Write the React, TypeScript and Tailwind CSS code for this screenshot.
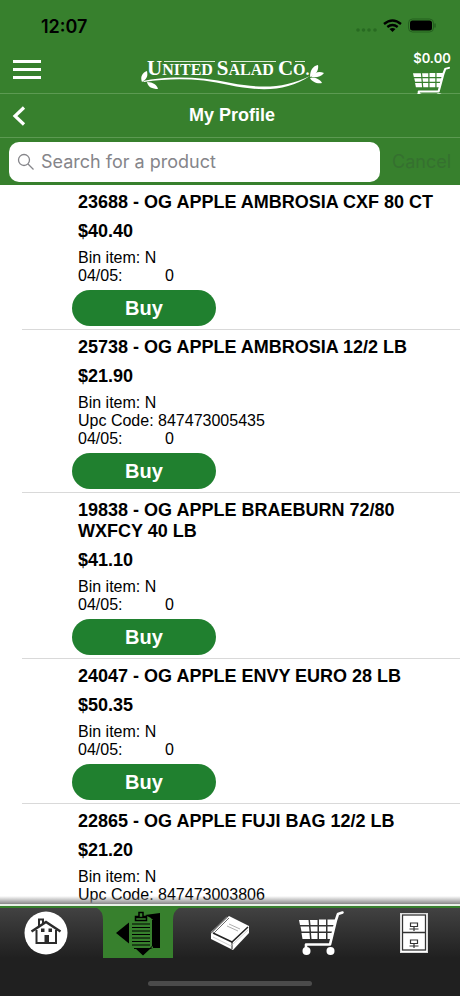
import { ReactNode } from "react";

type Product = {
  code: string;
  name: string;
  price: string;
  bin: string;
  upc?: string;
  date: string;
  qty: number;
};

const products: Product[] = [
  { code: "23688", name: "OG APPLE AMBROSIA CXF 80 CT", price: "$40.40", bin: "N", date: "04/05", qty: 0 },
  { code: "25738", name: "OG APPLE AMBROSIA 12/2 LB", price: "$21.90", bin: "N", upc: "847473005435", date: "04/05", qty: 0 },
  { code: "19838", name: "OG APPLE BRAEBURN 72/80 WXFCY 40 LB", price: "$41.10", bin: "N", date: "04/05", qty: 0 },
  { code: "24047", name: "OG APPLE ENVY EURO 28 LB", price: "$50.35", bin: "N", date: "04/05", qty: 0 },
  { code: "22865", name: "OG APPLE FUJI BAG 12/2 LB", price: "$21.20", bin: "N", upc: "847473003806", date: "04/05", qty: 0 },
];

function Logo() {
  return (
    <svg width="190" height="40" viewBox="1 -4 190 40" fill="#fff">
      <text
        x="10"
        y="21"
        fontSize="16"
        fontWeight="700"
        fontFamily="'Liberation Serif', serif"
      >
        <tspan fontSize="21">U</tspan>NITED <tspan fontSize="21">S</tspan>ALAD{" "}
        <tspan fontSize="21">C</tspan>O.
      </text>
      <path d="M27 7.500H78M94 7.500H139M158 7.500H168" stroke="#dcebd8" strokeWidth="1" />
      <path d="M6 27C28 22 62 22 94 29C126 35 148 34 173 22C150 37 126 38 92 31C62 24 34 24 7 28Z" />
      {/* leaves on both ends of the branch */}
      <path d="M5 28C3 23 5 19 10 17C11 22 10 25 5 28Z" />
      <path d="M10 28C16 28 20 31 21 35C15 35 11 33 10 28Z" />
      <path d="M173 23C173 16 176 12 181 11C182 16 179 21 173 23Z" />
      <path d="M174 23C178 18 182 17 187 19C184 23 179 24 174 23Z" />
      <path d="M173 24C178 23 183 25 185 29C180 30 175 28 173 24Z" />
    </svg>
  );
}

function CartIcon({ className, viewBox = "0 0 46 46" }: { className: string; viewBox?: string }) {
  return (
    <svg className={className} viewBox={viewBox} preserveAspectRatio="none" fill="#fff">
      <path d="M0 10H9.500L10 15H1ZM11 10H18.500V15H11.500ZM20 9.500H27V15H20ZM28.500 9.500H37L35.500 15H28.500Z" />
      <path d="M1.500 16.500H10L10.500 21.500H2.500ZM11.500 16.500H18.500V21.500H12ZM20 16.500H27V21.500H20ZM28.500 16.500H35.500L34.500 21.500H28.500Z" />
      <path d="M2.500 23H10.500L11 29H3.500ZM12 23H18.500V29H12.500ZM20 23H27V29H20ZM28.500 23H34L33 29H28.500Z" />
      <path d="M43.500 2.500L39 4L37 10L31 34.500H7V38" fill="none" stroke="#fff" strokeWidth="2.600" strokeLinejoin="round" strokeLinecap="round" />
      <circle cx="7.500" cy="41" r="4" />
      <circle cx="31.500" cy="41" r="4" />
    </svg>
  );
}

function HomeIcon() {
  return (
    <svg width="44" height="44" viewBox="0 0 44 44">
      <circle cx="22" cy="22" r="21.500" fill="#fff" />
      <g fill="none" stroke="#2c2c2c" strokeWidth="2">
        <path d="M7.500 20.500L22 11L36.500 20.500" strokeWidth="2.500" />
        <path d="M12.500 19V32H32V19" />
        <path d="M15 15V8.500H19V12" />
      </g>
      <path d="M20.500 24H25V33H20.500ZM17 17.500H20.500V21H17ZM24.500 17.500H28V21H24.500Z" fill="#2c2c2c" />
    </svg>
  );
}

function OrdersIcon() {
  return (
    <svg width="46" height="46" viewBox="0 0 46 46" fill="#000">
      <path d="M1 23L14 12.500V33.500Z" />
      <path d="M30 5L45 3V38H38L35 39L28 45.500L20 38H34L38 35V11L36 8Z" />
      <path d="M16 9.500H38V38H16Z" fill="#37802d" />
      <path d="M17 14H35M17 17.500H35M17 21H35M17 24.500H35M17 28H35M17 31.500H35M17 35H35" stroke="#000" strokeWidth="1" />
      <path d="M37.500 10V36L35 38.500H19" fill="none" stroke="#000" strokeWidth="1" />
      <path d="M20.500 10.500V6.500H24V2.500H28V6.500H31.500V10.500Z" fill="#37802d" stroke="#000" strokeWidth="1.500" />
      <path d="M21 7.500H31" stroke="#000" strokeWidth="1.500" />
    </svg>
  );
}

function BookIcon() {
  return (
    <svg width="42" height="36" viewBox="0 0 42 36">
      <path d="M20 1L40 11V18L24 35L2 24V17Z" fill="#fff" />
      <path d="M18 2L2 18" stroke="#777" strokeWidth="1.500" />
      <path d="M4 18L23 27L39 12" fill="none" stroke="#222" strokeWidth="1.500" />
      <path d="M23 27V34" stroke="#222" strokeWidth="1" />
      <path d="M4 22L22 31L39 15" fill="none" stroke="#bbb" strokeWidth="0.700" />
      <path d="M20 9L31 14M18 11L29 16" stroke="#999" strokeWidth="0.800" />
      <path d="M20 3L5 18" stroke="#444" strokeWidth="0.800" />
    </svg>
  );
}

function CabinetIcon() {
  return (
    <svg width="28" height="40" viewBox="0 0 28 40" fill="none" stroke="#333">
      <rect x="0.500" y="0.500" width="27" height="39" fill="#fff" stroke="#ddd" />
      <rect x="2.500" y="2" width="23" height="35" strokeWidth="1.300" />
      <path d="M2 19.500H26" strokeWidth="1.500" />
      <path d="M10.500 10H17.500V13.500H10.500ZM9.500 16H18.500M14 14V18M10.500 27H17.500V30.500H10.500ZM9.500 33H18.500M14 31V35" strokeWidth="1.200" />
    </svg>
  );
}

function StatusBar() {
  return (
    <div className="flex h-[46px] items-center justify-between pl-[41px] pr-6 pt-1.5 text-black">
      <span className="font-['Inter',sans-serif] text-[18px] font-semibold">12:07</span>
      <svg width="81" height="16" viewBox="0 0 81 16">
        <g fill="#286a22">
          <circle cx="3" cy="12" r="1.800" />
          <circle cx="8.500" cy="12" r="1.800" />
          <circle cx="14" cy="12" r="1.800" />
          <circle cx="20" cy="12" r="1.800" />
        </g>
        <g fill="none" stroke="#000" strokeWidth="2.400">
          <path d="M29 6Q37.500 -1 46 6" />
          <path d="M32.300 9Q37.500 5 42.700 9" />
        </g>
        <path d="M34.500 11Q37.500 8.800 40.500 11L37.500 14Z" />
        <rect x="53.500" y="1" width="25" height="13" rx="4" fill="none" stroke="#24611f" />
        <rect x="55" y="2.500" width="22" height="10" rx="2.500" />
        <path d="M80 5.500V9.500" stroke="#24611f" strokeWidth="1.500" />
      </svg>
    </div>
  );
}

function ProductRow({ product }: { product: Product }) {
  return (
    <li className="ml-[22px] border-b border-[#d9d9d9] pb-[3px] pl-[50px] pr-5 pt-[7px]">
      <div className="pl-1.5">
        <h2 className="text-[18px] font-bold leading-[21px]">{`${product.code} - ${product.name}`}</h2>
        <p className="mt-2 text-[18px] font-bold leading-[21px]">{product.price}</p>
        <div className="mt-[7px] text-[16px] leading-[18px]">
          <p>{`Bin item: ${product.bin}`}</p>
          {product.upc && <p>{`Upc Code: ${product.upc}`}</p>}
          <p className="flex">
            <span className="w-[87px]">{`${product.date}:`}</span>
            <span>{product.qty}</span>
          </p>
        </div>
      </div>
      <button className="mt-[5px] block h-9 w-36 rounded-full bg-[#20802f] text-[20px] font-bold text-white">
        Buy
      </button>
    </li>
  );
}

function Tab({ label, active, children }: { label: string; active?: boolean; children: ReactNode }) {
  return (
    <a href="#" aria-label={label} className="flex h-[50px] flex-1 justify-center">
      {active ? (
        <span className="relative flex h-full w-[70px] items-center justify-center bg-[#37802d]">
          {/* flared top corners */}
          <svg className="absolute -left-1.5 top-0" width="82" height="12" viewBox="0 0 82 12" fill="#37802d">
            <path d="M0 0H82Q76 3 76 12H6Q6 3 0 0Z" />
          </svg>
          <span className="relative">{children}</span>
        </span>
      ) : (
        <span className="flex items-center">{children}</span>
      )}
    </a>
  );
}

export default function App() {
  return (
    <div className="flex h-screen flex-col overflow-hidden bg-white font-['Liberation_Sans',Arial,sans-serif] text-black">
      <header className="shrink-0 bg-[#37802d] text-white">
        <StatusBar />
        <div className="flex h-12 items-center justify-between border-b border-[#5c9a52] pl-[13px] pr-2">
          <button aria-label="Menu" className="flex w-10 flex-col gap-[5px]">
            <span className="h-[3px] w-7 bg-white" />
            <span className="h-[3px] w-7 bg-white" />
            <span className="h-[3px] w-7 bg-white" />
          </button>
          <Logo />
          <button aria-label="Cart" className="flex w-10 flex-col items-center pt-1 font-['Inter',sans-serif] text-[13px] font-semibold leading-4">
            $0.00
            <CartIcon className="h-7 w-[38px]" viewBox="0 0 46 38" />
          </button>
        </div>
        <div className="flex h-11 items-center border-b border-[#5c9a52] px-3">
          <button aria-label="Back" className="w-6">
            <svg width="14" height="20" viewBox="0 0 14 20" fill="none" stroke="#fff" strokeWidth="3.200">
              <path d="M12 1.500L3 10L12 18.500" />
            </svg>
          </button>
          <h1 className="flex-1 pr-5 text-center text-[18px] font-bold">My Profile</h1>
        </div>
        <div className="flex h-[47px] items-center pl-[9px] pr-2">
          <label className="flex h-10 flex-1 items-center gap-1.5 rounded-[10px] bg-white px-2">
            <svg width="18" height="18" viewBox="0 0 18 18" fill="none" stroke="#85858a" strokeWidth="1.300">
              <circle cx="7" cy="7" r="5.500" />
              <path d="M11 11L16.500 16.500" />
            </svg>
            <input
              type="text"
              aria-label="Search for a product"
              placeholder="Search for a product"
              className="min-w-0 flex-1 font-['Inter',sans-serif] text-[18px] text-black outline-none placeholder:text-[#85858a]"
            />
          </label>
          <button className="w-[72px] pl-3 text-left font-['Inter',sans-serif] text-[18px] text-[#35702f]">Cancel</button>
        </div>
      </header>

      <main className="min-h-0 flex-1 overflow-hidden">
        <ul>
          {products.map((product) => (
            <ProductRow key={product.code} product={product} />
          ))}
        </ul>
      </main>

      <footer className="relative shrink-0 bg-[#202020]">
        <div className="pointer-events-none absolute inset-x-0 -top-2 h-2 bg-linear-to-b from-transparent to-[#888]" />
        <div className="h-0.5 bg-[#e8f0e6]" />
        <div className="h-0.5 bg-[#37802d]" />
        <nav className="flex bg-linear-to-b from-[#424242] to-[#202020]">
          <Tab label="Home">
            <HomeIcon />
          </Tab>
          <Tab label="Orders" active>
            <OrdersIcon />
          </Tab>
          <Tab label="Catalog">
            <BookIcon />
          </Tab>
          <Tab label="Cart">
            <CartIcon className="h-[46px] w-[46px]" />
          </Tab>
          <Tab label="Archive">
            <CabinetIcon />
          </Tab>
        </nav>
        <div className="flex h-[38px] items-end justify-center pb-2.5">
          <div className="h-[5px] w-[164px] rounded-full bg-[#4b4b4b]" />
        </div>
      </footer>
    </div>
  );
}
